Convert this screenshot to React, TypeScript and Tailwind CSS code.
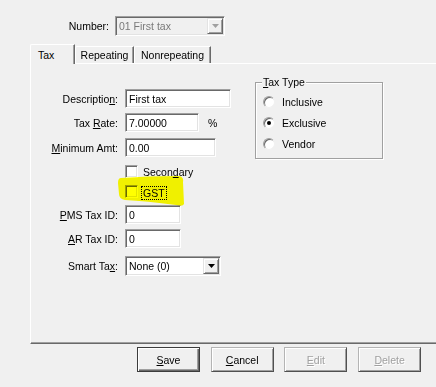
import React from "react";

const sunken =
  "border border-t-[#a0a0a0] border-l-[#a0a0a0] border-r-white border-b-white shadow-[inset_1px_1px_0_#696969,inset_-1px_-1px_0_#e3e3e3]";
const raised =
  "border border-t-[#e3e3e3] border-l-[#e3e3e3] border-r-[#696969] border-b-[#696969] shadow-[inset_1px_1px_0_#fff,inset_-1px_-1px_0_#a0a0a0] bg-[#f0f0f0]";

function U({ children }: { children: React.ReactNode }) {
  return <span className="underline underline-offset-[1px]">{children}</span>;
}

function Arrow({ color }: { color: string }) {
  return (
    <svg width="7" height="4" viewBox="0 0 7 4">
      <polygon points="0,0 7,0 3.5,4" fill={color} />
    </svg>
  );
}

function Combo({
  text,
  width,
  disabled,
}: {
  text: string;
  width: string;
  disabled?: boolean;
}) {
  return (
    <div
      className={`${sunken} ${width} h-[20px] flex items-center justify-between pl-[2px] pr-[1px] ${
        disabled ? "bg-[#f0f0f0] text-[#7a7a7a]" : "bg-white text-black"
      }`}
    >
      <span className="pl-[1px]">{text}</span>
      <div className={`${raised} w-[16px] h-[16px] flex items-center justify-center`}>
        <Arrow color={disabled ? "#a0a0a0" : "#000"} />
      </div>
    </div>
  );
}

function Input({ value, width }: { value: string; width: string }) {
  return (
    <div className={`${sunken} ${width} h-[19px] bg-white flex items-center pl-[3px]`}>
      {value}
    </div>
  );
}

function Row({
  label,
  children,
  className,
}: {
  label?: React.ReactNode;
  children: React.ReactNode;
  className: string;
}) {
  return (
    <div className={`flex items-center ${className}`}>
      <div className="w-[87px] text-right whitespace-nowrap">{label}</div>
      <div className="ml-[7px] flex items-center">{children}</div>
    </div>
  );
}

function Checkbox() {
  return <div className={`${sunken} w-[13px] h-[13px] bg-white`} />;
}

function Radio({ checked, label }: { checked?: boolean; label: string }) {
  return (
    <div className="h-[21px] flex items-center">
      <div className="w-[12px] h-[12px] rounded-full bg-white border border-t-[#a0a0a0] border-l-[#a0a0a0] border-r-[#f0f0f0] border-b-[#f0f0f0] shadow-[inset_1px_1px_0_#696969] flex items-center justify-center">
        {checked && <div className="w-[4px] h-[4px] rounded-full bg-black" />}
      </div>
      <span className="ml-[7px]">{label}</span>
    </div>
  );
}

function Button({
  children,
  disabled,
  isDefault,
}: {
  children: React.ReactNode;
  disabled?: boolean;
  isDefault?: boolean;
}) {
  return (
    <div
      className={`w-[63px] h-[25px] flex items-center justify-center bg-[#f0f0f0] ${
        isDefault
          ? "border border-[#3c3c3c] shadow-[inset_1px_1px_0_#fff,inset_-1px_-1px_0_#696969,inset_-2px_-2px_0_#a0a0a0]"
          : "border border-t-[#b4b4b4] border-l-[#b4b4b4] border-r-[#505050] border-b-[#505050] shadow-[inset_1px_1px_0_#fff,inset_-1px_-1px_0_#a0a0a0]"
      } ${disabled ? "text-[#a0a0a0] [text-shadow:1px_1px_0_#fff]" : "text-black"}`}
    >
      {children}
    </div>
  );
}

export default function App() {
  return (
    <div className="relative w-[436px] h-[387px] overflow-hidden bg-[#f0f0f0] text-black text-[10.5px] leading-[12px] font-['Liberation_Sans',Arial,sans-serif]">
      {/* Number row */}
      <div className="flex items-center pt-[16px]">
        <div className="w-[109px] text-right">Number:</div>
        <div className="ml-[6px]">
          <Combo text="01 First tax" width="w-[110px]" disabled />
        </div>
      </div>

      {/* Tabs */}
      <div className="mt-[8px] h-[19px] flex items-end pl-[30px]">
        <div className="relative z-10 -mb-[1px] h-[20px] w-[45px] bg-[#f0f0f0] border-t border-l border-white border-r border-r-[#696969] rounded-tl-[2px] flex items-start pt-[4px] pl-[7px] shadow-[inset_-1px_0_0_#a0a0a0]">
          Tax
        </div>
        <div className="h-[17px] w-[59px] border-t border-l border-white border-r border-r-[#696969] rounded-tl-[2px] flex items-center justify-center shadow-[inset_-1px_0_0_#a0a0a0]">
          Repeating
        </div>
        <div className="h-[17px] w-[77px] border-t border-l border-white border-r border-r-[#696969] rounded-tl-[2px] flex items-center justify-center shadow-[inset_-1px_0_0_#a0a0a0]">
          Nonrepeating
        </div>
      </div>

      {/* Panel */}
      <div className="ml-[30px] h-[281px] border-t border-l border-white border-b border-b-[#696969] shadow-[inset_0_-1px_0_#a0a0a0] flex">
        <div className="w-[200px] pt-[25px] flex flex-col">
          <Row
            className="h-[19px]"
            label={
              <>
                Descriptio<U>n</U>:
              </>
            }
          >
            <Input value="First tax" width="w-[106px]" />
          </Row>
          <Row
            className="mt-[5px] h-[19px]"
            label={
              <>
                Tax <U>R</U>ate:
              </>
            }
          >
            <Input value="7.00000" width="w-[74px]" />
            <span className="ml-[9px]">%</span>
          </Row>
          <Row
            className="mt-[6px] h-[19px]"
            label={
              <>
                <U>M</U>inimum Amt:
              </>
            }
          >
            <Input value="0.00" width="w-[91px]" />
          </Row>
          <Row className="mt-[8px] h-[13px]">
            <Checkbox />
            <span className="ml-[5px]">
              Secon<U>d</U>ary
            </span>
          </Row>
          <Row className="mt-[7px] h-[13px]">
            <Checkbox />
            <span className="ml-[3px] mt-[2px] border border-dotted border-black px-[1px] leading-[12px]">
              GST
            </span>
          </Row>
          <Row
            className="mt-[7px] h-[19px]"
            label={
              <>
                <U>P</U>MS Tax ID:
              </>
            }
          >
            <Input value="0" width="w-[56px]" />
          </Row>
          <Row
            className="mt-[5px] h-[19px]"
            label={
              <>
                <U>A</U>R Tax ID:
              </>
            }
          >
            <Input value="0" width="w-[56px]" />
          </Row>
          <Row
            className="mt-[8px] h-[19px]"
            label={
              <>
                Smart Ta<U>x</U>:
              </>
            }
          >
            <Combo text="None (0)" width="w-[96px]" />
          </Row>
        </div>

        {/* Tax Type group */}
        <div className="relative ml-[24px] mt-[18px] w-[128px] h-[77px] border border-[#a0a0a0] shadow-[inset_1px_1px_0_#fff,1px_1px_0_#fff] pl-[7px] pt-[8px] flex flex-col">
          <div className="absolute left-[6px] -top-[7px] bg-[#f0f0f0] px-[1px] leading-[12px]">
            <U>T</U>ax Type
          </div>
          <Radio label="Inclusive" />
          <Radio label="Exclusive" checked />
          <Radio label="Vendor" />
        </div>
      </div>

      {/* Buttons */}
      <div className="mt-[3px] pl-[137px] flex gap-[10.7px]">
        <Button isDefault>
          <span>
            <U>S</U>ave
          </span>
        </Button>
        <Button>
          <span>
            <U>C</U>ancel
          </span>
        </Button>
        <Button disabled>
          <span>
            <U>E</U>dit
          </span>
        </Button>
        <Button disabled>
          <span>
            <U>D</U>elete
          </span>
        </Button>
      </div>

      {/* Highlighter mark */}
      <svg
        className="absolute left-[116px] top-[173px] mix-blend-multiply pointer-events-none"
        width="70"
        height="36"
        viewBox="0 0 70 36"
      >
        <path
          d="M5 5 Q30 3 63 3 Q68 4 67 9 L68 31 Q67 34 60 32 Q30 28 9 27 Q3 26 3 21 L2 10 Q2 5 5 5 Z"
          fill="#ffff00"
        />
      </svg>
    </div>
  );
}
